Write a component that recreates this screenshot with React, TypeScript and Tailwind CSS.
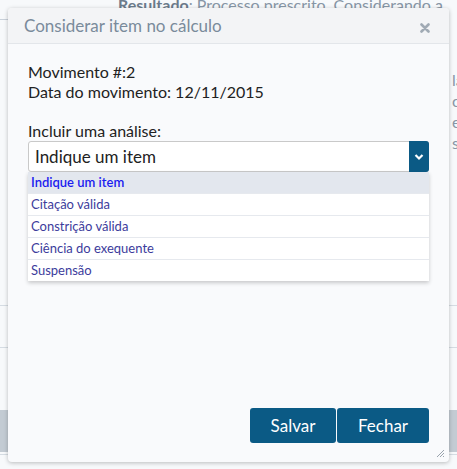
import React from 'react'

const options = ['Indique um item', 'Citação válida', 'Constrição válida', 'Ciência do exequente', 'Suspensão']

export default function App() {
  return (
    <div className="relative h-[469px] w-[457px] overflow-hidden bg-[#f7f9fb] font-['Lato',sans-serif]">
      {/* page behind the modal */}
      <div className="ml-[118px] -mt-[7px] whitespace-nowrap text-[16px] text-[#8796a6]">
        <span className="font-bold text-[#6b7b8b]">Resultado</span>: Processo prescrito. Considerando a
      </div>
      <div className="mt-[2px] h-px w-[10px] bg-[#c9d1da]" />
      <div className="ml-[452px] mt-[49px] flex flex-col text-[16px] leading-[21px] text-[#8796a6]">
        <span>la</span>
        <span>os</span>
        <span>e</span>
        <span>s</span>
      </div>
      <div className="mt-[152px] h-px w-full bg-[#d5dce3]" />
      <div className="mt-[41px] h-px w-full bg-[#d5dce3]" />
      <div className="mt-[62px] h-[42px] w-full bg-[#c3cbd3]" />
      <div className="mt-[2px] h-px w-full bg-[#d5dce3]" />

      {/* modal */}
      <div className="absolute left-[8px] top-[8px] flex h-[454px] w-[441px] flex-col rounded-[4px] bg-[#f9fafc] shadow-[0_1px_4px_rgba(0,0,0,0.25)]">
        <div className="flex h-[36px] items-center justify-between rounded-t-[4px] border-b border-[#e3e6ea] bg-[#f3f4f6] pl-[16px] pr-[19px]">
          <span className="text-[17px] text-[#7a8b9b]">Considerar item no cálculo</span>
          <svg className="mt-[4px]" width="10" height="10" viewBox="0 0 10 10">
            <path d="M1.5 1.5 L8.5 8.5 M8.5 1.5 L1.5 8.5" stroke="#a0aab4" strokeWidth="2.6" strokeLinecap="round" />
          </svg>
        </div>
        <div className="flex flex-1 flex-col px-[20px] pt-[18px]">
          <div className="text-[16px] leading-[20px] text-[#222]">Movimento #:2</div>
          <div className="text-[16px] leading-[20px] text-[#222]">Data do movimento: 12/11/2015</div>
          <div className="mt-[19px] text-[16px] leading-[20px] text-[#222]">Incluir uma análise:</div>
          <div className="relative">
            <div className="flex h-[31px] items-center justify-between rounded-[3px] border border-[#c9c9c9] bg-white pl-[6px]">
              <span className="text-[17px] text-[#222]">Indique um item</span>
              <span className="flex h-[31px] w-[20px] -mr-px items-center justify-center rounded-r-[3px] bg-[#0b5a85]">
                <svg width="10" height="8" viewBox="0 0 10 8">
                  <path d="M1.5 2 L5 5.5 L8.5 2" stroke="white" strokeWidth="2.2" fill="none" />
                </svg>
              </span>
            </div>
            <div className="absolute left-0 right-0 top-[31px] bg-white shadow-[0_2px_4px_rgba(0,0,0,0.2)]">
              {options.map((o, i) => (
                <div
                  key={o}
                  className={
                    i === 0
                      ? 'flex h-[21px] items-center bg-[#e3e7ee] pl-[3px] text-[13px] font-semibold text-[#1c1cf0]'
                      : 'flex h-[22px] items-center border-t border-[#e6e9ee] pl-[3px] text-[13px] text-[#3c3c9c]'
                  }
                >
                  {o}
                </div>
              ))}
            </div>
          </div>
        </div>
        <div className="flex justify-end gap-px pb-[19px] pr-[20px]">
          <button className="h-[35px] w-[86px] rounded-[3px] bg-[#0b5a85] text-[17px] text-white">Salvar</button>
          <button className="h-[35px] w-[92px] rounded-[3px] bg-[#0b5a85] text-[17px] text-white">Fechar</button>
        </div>
        <svg className="absolute bottom-[4px] right-[4px]" width="9" height="9" viewBox="0 0 9 9">
          <path d="M8 1 L1 8 M8 4 L4 8 M8 7 L7 8" stroke="#9aa3ad" strokeWidth="1" />
        </svg>
      </div>
    </div>
  )
}
